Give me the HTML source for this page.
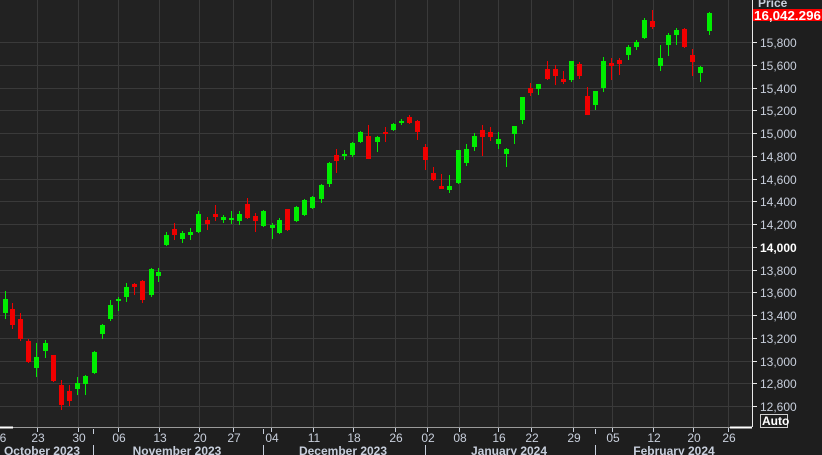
<!DOCTYPE html>
<html><head><style>
html,body{margin:0;padding:0;background:#1e1e1e;width:822px;height:455px;overflow:hidden}
svg{display:block;font-family:"Liberation Sans",sans-serif}
</style></head><body>
<svg width="822" height="455" xmlns="http://www.w3.org/2000/svg">
<rect x="0" y="0" width="752" height="427" fill="#222222"/>
<g stroke="#3a3a3a" stroke-width="1" id="grid"></g>
<g id="candles"></g>
<line x1="752.5" y1="0" x2="752.5" y2="427" stroke="#e8e8e8"/>
<line x1="0" y1="427.5" x2="752" y2="427.5" stroke="#9a9a9a"/>
<line x1="0" y1="427.5" x2="13" y2="427.5" stroke="#ffffff" stroke-width="2"/>
<line x1="730" y1="427.5" x2="752" y2="427.5" stroke="#ffffff" stroke-width="2"/>
<g id="ylab" font-size="12" fill="#c8cfdc"></g>
<text x="758" y="7" font-size="12" font-weight="bold" fill="#c8cfdc">Price</text>
<rect x="753" y="9" width="69" height="12" fill="#ff0000"/>
<text x="754" y="20" font-size="13" font-weight="bold" fill="#ffffff" textLength="67" lengthAdjust="spacingAndGlyphs">16,042.296</text>
<rect x="760.5" y="414.5" width="27" height="13" fill="none" stroke="#d0d0d0"/>
<text x="762" y="425" font-size="12" font-weight="bold" fill="#ffffff">Auto</text>
<g id="xlab" font-size="12" fill="#c8cfdc" text-anchor="middle"></g>
<g font-size="12" font-weight="bold" fill="#c8cfdc" text-anchor="middle">
<text x="42" y="455">October 2023</text>
<text x="177" y="455">November 2023</text>
<text x="343" y="455">December 2023</text>
<text x="509" y="455">January 2024</text>
<text x="674" y="455">February 2024</text>
</g>
<g stroke="#c8cfdc">
<line x1="93.5" y1="429" x2="93.5" y2="434"/><line x1="93.5" y1="445" x2="93.5" y2="455"/>
<line x1="263.5" y1="429" x2="263.5" y2="434"/><line x1="263.5" y1="445" x2="263.5" y2="455"/>
<line x1="425.5" y1="445" x2="425.5" y2="455"/>
<line x1="595.5" y1="429" x2="595.5" y2="434"/><line x1="595.5" y1="445" x2="595.5" y2="455"/>
</g>
</svg>
<script>
const NS="http://www.w3.org/2000/svg";
function el(p,t,a,txt){const e=document.createElementNS(NS,t);for(const k in a)e.setAttribute(k,a[k]);if(txt)e.textContent=txt;document.getElementById(p).appendChild(e);}
const xs=[[37,"23"],[78,"30"],[118,"06"],[159,"13"],[199,"20"],[233,"27"],[271,"04"],[313,"11"],[353,"18"],[395,"26"],[427,"02"],[459,"08"],[498,"16"],[531,"22"],[573,"29"],[612,"05"],[653,"12"],[693,"20"],[728,"26"]];
el("xlab","text",{x:3,y:442},"6");
xs.forEach(([x,l])=>{el("grid","line",{x1:x+.5,y1:0,x2:x+.5,y2:427});el("xlab","text",{x:x+1,y:442},l);
const t=document.createElementNS(NS,"line");t.setAttribute("x1",x+.5);t.setAttribute("x2",x+.5);t.setAttribute("y1",428);t.setAttribute("y2",432);t.setAttribute("stroke","#c8cfdc");document.querySelector("svg").appendChild(t);});
for(let p=15800;p>=12600;p-=200){const y=Math.round(42+(15800-p)/200*22.75)+.5;
el("grid","line",{x1:0,y1:y,x2:752,y2:y});
const t=document.createElementNS(NS,"line");t.setAttribute("x1",752);t.setAttribute("x2",757);t.setAttribute("y1",y);t.setAttribute("y2",y);t.setAttribute("stroke","#e8e8e8");document.querySelector("svg").appendChild(t);
const s=p.toLocaleString("en-US");
el("ylab","text",p==14000?{x:760,y:y+4.5,"font-weight":"bold",fill:"#ffffff"}:{x:760,y:y+4.5},s);}
const C=[
[4.5,299,313,291,319,"g"],[12,309,325,303,329,"r"],[20,319,339,313,341,"r"],[28,341,362,339,363,"r"],[36,357,368,343,377,"g"],[45,343,351,340,358,"g"],[53,355,381,355,382,"r"],[61,385,405,380,410,"r"],[69,391,401,385,406,"r"],[77,383,389,377,395,"g"],[85,376,384,375,395,"g"],[94,352,373,351,374,"g"],[102,325,334,324,339,"g"],[110,305,319,300,321,"g"],[118,299,301,297,311,"g"],[126,287,297,283,302,"g"],[134,284,287,283,295,"r"],[142,281,300,280,303,"r"],[151,269,295,268,297,"g"],[158,272,276,268,282,"g"],
[166,235,245,232,246,"g"],[174,229,235,223,240,"r"],[182,233,239,231,243,"g"],[190,232,235,228,240,"g"],[198,214,232,211,233,"g"],[207,220,224,217,230,"r"],[215,214,217,205,221,"r"],[223,217,220,215,223,"g"],[231,218,220,211,224,"g"],[239,214,221,211,225,"g"],[247,204,218,198,219,"r"],[255,216,221,213,232,"r"],[263,211,226,210,227,"g"],[272,225,228,223,239,"g"],[279,220,233,218,234,"g"],[287,209,230,209,231,"r"],[296,207,221,206,222,"g"],[304,200,215,199,216,"g"],[312,197,208,196,209,"g"],[321,185,199,184,203,"g"],[329,163,184,162,187,"g"],[336,155,161,149,173,"r"],[344,154,156,150,160,"g"],[352,143,155,142,157,"g"],[360,132,142,131,143,"g"],[368,136,159,125,159,"r"],[377,137,142,136,152,"g"],[385,132,134,127,142,"r"],[393,124,130,123,131,"g"],[401,121,123,119,125,"g"],[409,117,123,115,124,"r"],[417,121,132,120,140,"r"],[425,147,160,144,170,"r"],
[433,173,180,167,181,"r"],[441,186,189,174,189,"r"],[449,186,190,175,193,"g"],[458,150,183,150,184,"g"],[466,149,163,144,166,"g"],[474,136,147,133,151,"g"],[482,130,137,125,156,"r"],[490,132,137,127,141,"r"],[498,139,144,132,149,"g"],[506,149,154,148,167,"g"],[514,126,134,126,144,"g"],[522,97,120,97,124,"g"],[530,88,93,83,96,"r"],[538,84,89,84,95,"g"],[547,69,79,61,80,"r"],[555,69,76,65,85,"r"],[563,79,82,71,84,"r"],[571,61,80,61,82,"g"],[579,64,76,62,79,"r"],[587,96,115,87,115,"r"],[595,91,105,91,110,"g"],[603,61,88,57,92,"g"],[611,63,66,58,80,"r"],[619,60,64,58,75,"r"],
[628,47,55,45,60,"g"],[636,42,47,40,50,"g"],[644,20,38,18,39,"g"],[652,21,27,10,29,"r"],[660,58,66,45,71,"g"],[668,35,45,33,56,"g"],[676,30,35,28,45,"g"],[684,29,47,28,48,"r"],[692,55,62,49,76,"r"],[700,67,73,66,82,"g"],[709,13,31,12,35,"g"]];
C.forEach(([x,bt,bb,wt,wb,c])=>{const col=c=="g"?"#00ee00":"#f00000";const xc=Math.round(x);
el("candles","rect",{x:xc,y:wt,width:1,height:wb-wt,fill:col});
el("candles","rect",{x:xc-2,y:bt,width:5,height:Math.max(2,bb-bt),fill:col});});
</script>
</body></html>
